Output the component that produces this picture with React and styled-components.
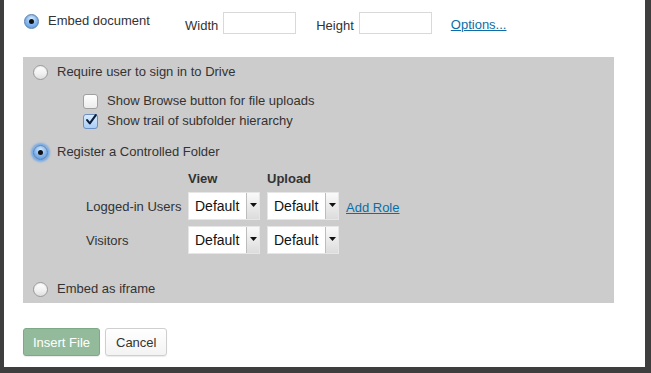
import React from 'react'
import styled, { createGlobalStyle } from 'styled-components'

const GlobalStyle = createGlobalStyle`
    html, body {
        margin: 0;
        padding: 0;
        background: #3e3e3e;
        font-family: "Liberation Sans", Arial, sans-serif;
        color: #333;
    }
`

function App() {
    return (
        <Page>
            <GlobalStyle />
            <Dialog>
                <TopRow>
                    <EmbedOption>
                        <Radio checked />
                        <OptionText>Embed document</OptionText>
                    </EmbedOption>
                    <FieldLabel>Width</FieldLabel>
                    <SizeInput />
                    <FieldLabel gap={20}>Height</FieldLabel>
                    <SizeInput />
                    <Link href="#" style={{ marginLeft: 19 }}>Options...</Link>
                </TopRow>

                <Panel>
                    <OptionRow>
                        <Radio />
                        <OptionText>Require user to sign in to Drive</OptionText>
                    </OptionRow>
                    <CheckList>
                        <CheckRow>
                            <Checkbox />
                            <OptionText>Show Browse button for file uploads</OptionText>
                        </CheckRow>
                        <CheckRow>
                            <Checkbox checked>
                                <svg width="14" height="14" viewBox="0 0 14 14">
                                    <path d="M2.5 7.2 L5.6 11 L12.6 1.2" fill="none" stroke="#0c1d3a" strokeWidth="2.4" strokeLinecap="round" strokeLinejoin="round" />
                                </svg>
                            </Checkbox>
                            <OptionText>Show trail of subfolder hierarchy</OptionText>
                        </CheckRow>
                    </CheckList>
                    <OptionRow top={12}>
                        <Radio checked focused />
                        <OptionText>Register a Controlled Folder</OptionText>
                    </OptionRow>
                    <RoleGrid>
                        <span />
                        <ColHead>View</ColHead>
                        <ColHead>Upload</ColHead>
                        <span />

                        <RoleName>Logged-in Users</RoleName>
                        <Select value="Default" />
                        <Select value="Default" />
                        <Link href="#">Add Role</Link>

                        <RoleName>Visitors</RoleName>
                        <Select value="Default" />
                        <Select value="Default" />
                        <span />
                    </RoleGrid>
                    <OptionRow top={26}>
                        <Radio />
                        <OptionText>Embed as iframe</OptionText>
                    </OptionRow>
                </Panel>

                <Actions>
                    <PrimaryButton>Insert File</PrimaryButton>
                    <Button>Cancel</Button>
                </Actions>
            </Dialog>
        </Page>
    )
}

function Select({ value }) {
    return (
        <SelectBox>
            <SelectValue>{value}</SelectValue>
            <SelectArrow>
                <svg width="7" height="4" viewBox="0 0 7 4">
                    <path d="M0 0 H7 L3.5 4 Z" fill="#111" />
                </svg>
            </SelectArrow>
        </SelectBox>
    )
}

export default App

const Page = styled.div`
    width: 651px;
    height: 373px;
    padding-left: 4px;
    box-sizing: border-box;
`

const Dialog = styled.div`
    width: 641px;
    height: 367px;
    background: #fff;
    padding: 12px 0 0 19px;
    box-sizing: border-box;
`

const TopRow = styled.div`
    display: flex;
    align-items: center;
    height: 22px;
    font-size: 13px;
`

const EmbedOption = styled.div`
    display: flex;
    align-items: center;
    align-self: flex-start;
    width: 162px;
    height: 18px;
    padding-left: 1px;
    box-sizing: border-box;
`

const OptionText = styled.span`
    font-size: 13px;
    line-height: 16px;
    color: #333;
    white-space: nowrap;
`

const FieldLabel = styled.span`
    font-size: 13px;
    margin-left: ${p => p.gap || 0}px;
    margin-right: 5px;
    padding-top: 4px;
`

const SizeInput = styled.div`
    width: 73px;
    height: 22px;
    border: 1px solid #d9d9d9;
    box-sizing: border-box;
    background: #fff;
`

const Link = styled.a`
    font-size: 13px;
    color: #0b6ea8;
    text-decoration: underline;
    padding-top: 3px;
    white-space: nowrap;
`

const Radio = styled.span`
    flex: none;
    width: 15px;
    height: 15px;
    border-radius: 50%;
    box-sizing: border-box;
    margin-right: 9px;
    position: relative;
    border: 1px solid ${p => (p.checked ? '#5b7fb0' : '#9a9a9a')};
    background: ${p => (p.checked
        ? 'radial-gradient(circle at 50% 30%, #d7ebff 0%, #8fbdf0 45%, #4f8fd8 100%)'
        : 'linear-gradient(#ffffff, #f0f0f0 60%, #dedede)')};
    box-shadow: ${p => (p.focused
        ? '0 0 2px 2px rgba(90, 160, 240, 0.75)'
        : 'inset 0 1px 1px rgba(0, 0, 0, 0.08)')};

    &::after {
        content: '';
        display: ${p => (p.checked ? 'block' : 'none')};
        position: absolute;
        left: 4px;
        top: 4px;
        width: 5px;
        height: 5px;
        border-radius: 50%;
        background: #111;
    }
`

const Panel = styled.div`
    width: 591px;
    height: 246px;
    margin-top: 23px;
    background: #cccccc;
    padding: 6px 0 0 10px;
    box-sizing: border-box;
`

const OptionRow = styled.div`
    display: flex;
    align-items: center;
    height: 18px;
    margin-top: ${p => p.top || 0}px;
`

const CheckList = styled.div`
    margin-top: 10px;
    padding-left: 50px;
`

const CheckRow = styled.div`
    display: flex;
    align-items: center;
    height: 20px;
`

const Checkbox = styled.span`
    flex: none;
    width: 15px;
    height: 15px;
    border-radius: 3px;
    box-sizing: border-box;
    margin-right: 9px;
    display: flex;
    align-items: center;
    justify-content: center;
    border: 1px solid ${p => (p.checked ? '#6b8fc0' : '#a0a0a0')};
    background: ${p => (p.checked
        ? 'linear-gradient(#d9ebff, #a9cdf5)'
        : 'linear-gradient(#ffffff, #ececec)')};

    svg {
        margin-top: -2px;
        margin-left: 1px;
    }
`

const RoleGrid = styled.div`
    display: grid;
    grid-template-columns: 95px 72px 72px auto;
    grid-template-rows: 16px 28px 28px;
    column-gap: 7px;
    row-gap: 6px;
    align-items: center;
    justify-content: start;
    margin-top: 9px;
    padding-left: 53px;
`

const ColHead = styled.span`
    font-size: 13px;
    font-weight: bold;
    color: #333;
`

const RoleName = styled.span`
    font-size: 13px;
    color: #333;
    white-space: nowrap;
`

const SelectBox = styled.div`
    display: flex;
    height: 28px;
    border: 1px solid #e6e6e6;
    box-sizing: border-box;
    background: #fff;
`

const SelectValue = styled.span`
    flex: 1;
    font-size: 14px;
    line-height: 26px;
    padding-left: 6px;
    color: #111;
`

const SelectArrow = styled.span`
    width: 13px;
    display: flex;
    align-items: center;
    justify-content: center;
    padding-bottom: 2px;
    box-sizing: border-box;
    border-left: 1px solid #bdbdbd;
    background: linear-gradient(#fafafa, #dcdcdc);
`

const Actions = styled.div`
    display: flex;
    gap: 5px;
    margin-top: 25px;
`

const Button = styled.button`
    height: 28px;
    padding: 0 10px;
    font-family: "Liberation Sans", Arial, sans-serif;
    font-size: 13px;
    color: #333;
    white-space: nowrap;
    background: linear-gradient(#ffffff, #f3f3f3);
    border: 1px solid #cfcfcf;
    border-radius: 3px;
    box-shadow: 0 1px 1px rgba(0, 0, 0, 0.08);
    cursor: pointer;
`

const PrimaryButton = styled(Button)`
    width: 77px;
    padding: 0;
    color: #fff;
    background: #93bb9b;
    border-color: #7ea987;
`
